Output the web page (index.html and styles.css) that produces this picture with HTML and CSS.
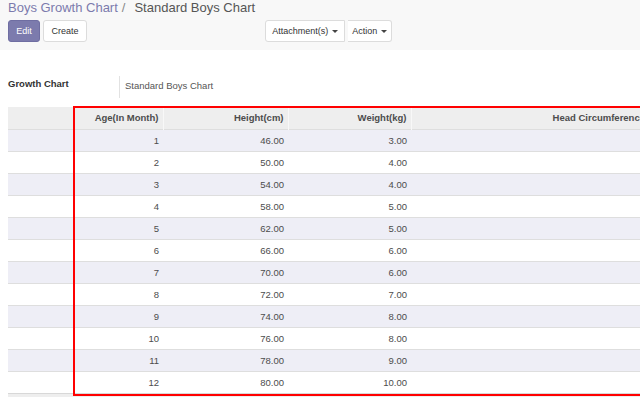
FILE: index.html
```html
<!DOCTYPE html>
<html>
<head>
<meta charset="utf-8">
<link rel="stylesheet" href="styles.css">
</head>
<body>
<div class="control-panel">
  <div class="breadcrumb"><span class="crumb-link">Boys Growth Chart</span><span class="crumb-sep">/</span><span class="crumb-active">Standard Boys Chart</span></div>
  <div class="button-row">
    <button class="btn btn-primary">Edit</button>
    <button class="btn btn-default">Create</button>
    <div class="btn-group">
      <button class="btn btn-default btn-left">Attachment(s) <span class="caret"></span></button>
      <button class="btn btn-default btn-right">Action <span class="caret"></span></button>
    </div>
  </div>
</div>
<div class="sheet">
  <div class="field-row">
    <div class="field-label">Growth Chart</div>
    <div class="field-value">Standard Boys Chart</div>
  </div>
  <table class="grid">
    <colgroup>
      <col class="c0"><col class="c1"><col class="c2"><col class="c3"><col class="c4">
    </colgroup>
    <thead>
      <tr><th></th><th>Age(In Month)</th><th>Height(cm)</th><th>Weight(kg)</th><th>Head Circumference</th></tr>
    </thead>
    <tbody>
      <tr><td></td><td>1</td><td>46.00</td><td>3.00</td><td></td></tr>
      <tr><td></td><td>2</td><td>50.00</td><td>4.00</td><td></td></tr>
      <tr><td></td><td>3</td><td>54.00</td><td>4.00</td><td></td></tr>
      <tr><td></td><td>4</td><td>58.00</td><td>5.00</td><td></td></tr>
      <tr><td></td><td>5</td><td>62.00</td><td>5.00</td><td></td></tr>
      <tr><td></td><td>6</td><td>66.00</td><td>6.00</td><td></td></tr>
      <tr><td></td><td>7</td><td>70.00</td><td>6.00</td><td></td></tr>
      <tr><td></td><td>8</td><td>72.00</td><td>7.00</td><td></td></tr>
      <tr><td></td><td>9</td><td>74.00</td><td>8.00</td><td></td></tr>
      <tr><td></td><td>10</td><td>76.00</td><td>8.00</td><td></td></tr>
      <tr><td></td><td>11</td><td>78.00</td><td>9.00</td><td></td></tr>
      <tr><td></td><td>12</td><td>80.00</td><td>10.00</td><td></td></tr>
    </tbody>
    <tfoot>
      <tr><td colspan="5"></td></tr>
    </tfoot>
  </table>
  <div class="highlight"></div>
</div>
</body>
</html>
```

FILE: styles.css
```css
html, body {
  margin: 0;
  padding: 0;
  background: #ffffff;
  overflow: hidden;
  width: 640px;
  height: 400px;
}
body {
  font-family: "Liberation Sans", Arial, sans-serif;
  color: #4c4c4c;
  position: relative;
}
.control-panel {
  background: #f8f8f8;
  padding: 0 8px;
  height: 50px;
  box-sizing: border-box;
}
.breadcrumb {
  font-size: 13px;
  line-height: 16px;
  height: 16px;
  white-space: nowrap;
}
.crumb-link { color: #7c7bad; }
.crumb-sep { color: #888; margin: 0 9px 0 4px; }
.crumb-active { color: #555; }
.button-row {
  display: flex;
  align-items: center;
  margin-top: 4px;
  height: 22px;
}
.btn {
  font-family: "Liberation Sans", Arial, sans-serif;
  font-size: 9px;
  height: 22px;
  box-sizing: border-box;
  border-radius: 3px;
  padding: 0 8px;
  margin: 0;
  cursor: pointer;
  line-height: 20px;
}
.btn-primary {
  background: #7c7bad;
  border: 1px solid #6f6ea2;
  color: #fff;
  width: 32px;
  padding: 0;
}
.btn-default {
  background: #fff;
  border: 1px solid #dcdcdc;
  color: #333;
}
.button-row .btn-default:nth-child(2) {
  margin-left: 3px;
  width: 44px;
  padding: 0;
}
.btn-group {
  display: flex;
  margin-left: 178px;
}
.btn-left {
  border-radius: 3px 0 0 3px;
  width: 80px;
  padding: 0;
}
.btn-right {
  border-radius: 0 3px 3px 0;
  border-left: none;
  width: 49px;
  padding: 0;
}
.caret {
  display: inline-block;
  width: 0;
  height: 0;
  border-left: 3px solid transparent;
  border-right: 3px solid transparent;
  border-top: 3px solid #444;
  vertical-align: middle;
  margin-left: 1px;
}
.sheet {
  padding-left: 8px;
}
.field-row {
  display: flex;
  margin-top: 26px;
  height: 22px;
  font-size: 9.5px;
}
.field-label {
  width: 111px;
  font-weight: bold;
  color: #333;
  line-height: 15px;
}
.field-value {
  border-left: 1px solid #e2e2e2;
  padding-left: 5px;
  line-height: 19px;
  color: #555;
}
.grid {
  margin-top: 9px;
  border-collapse: collapse;
  table-layout: fixed;
  width: 641px;
  font-size: 9.5px;
}
.c0 { width: 66px; }
.c1 { width: 89px; }
.c2 { width: 125px; }
.c3 { width: 123px; }
.c4 { width: 238px; }
.grid th {
  background: #eeeeee;
  height: 22px;
  padding: 0 4px;
  text-align: right;
  font-weight: bold;
  color: #4c4c4c;
  border-left: 1px solid #f8f8f8;
  box-sizing: border-box;
  white-space: nowrap;
  overflow: visible;
}
.grid th:first-child { border-left: none; }
.grid td {
  height: 22px;
  padding: 0 4px;
  text-align: right;
  border-top: 1px solid #dedede;
  box-sizing: border-box;
  color: #4c4c4c;
}
.grid tbody tr:nth-child(odd) td {
  background: #eeeef6;
}
.grid tfoot td {
  height: 4px;
  padding: 0;
  background: #eeeeee;
  border-top: 1px solid #d8d8d8;
}
.highlight {
  position: absolute;
  left: 73px;
  top: 106px;
  width: 600px;
  height: 286px;
  border: 2px solid #ff0000;
}
```
